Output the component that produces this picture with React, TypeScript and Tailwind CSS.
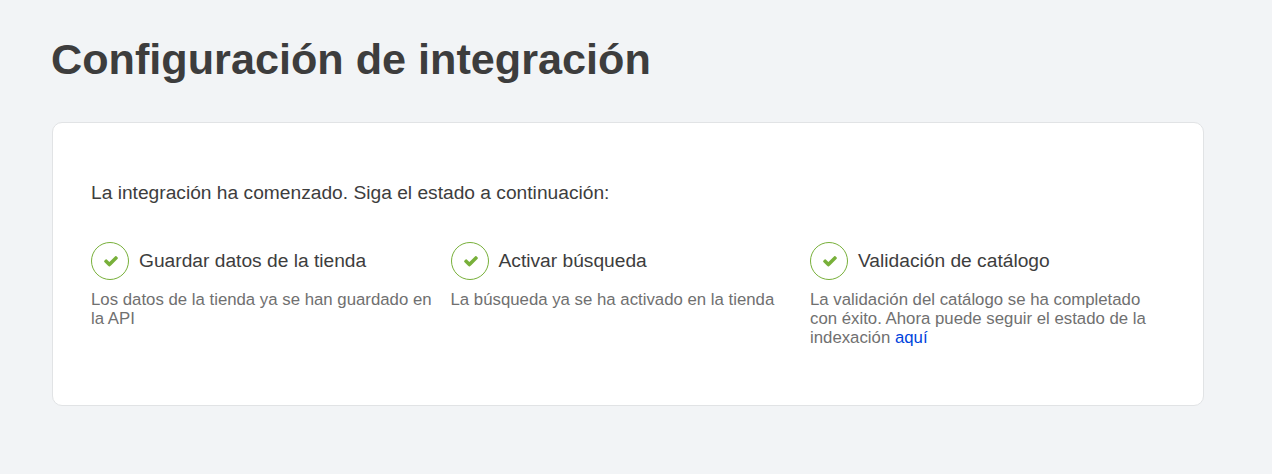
import React from "react";

type Step = { title: string; body: React.ReactNode };

const steps: Step[] = [
  { title: "Guardar datos de la tienda", body: "Los datos de la tienda ya se han guardado en la API" },
  { title: "Activar búsqueda", body: "La búsqueda ya se ha activado en la tienda" },
  {
    title: "Validación de catálogo",
    body: (
      <>
        La validación del catálogo se ha completado con éxito. Ahora puede seguir el estado de la indexación{" "}
        <a href="#" className="text-[#0044dd]">aquí</a>
      </>
    ),
  },
];

function CheckIcon() {
  return (
    <svg viewBox="0 0 1792 1792" fill="currentColor" aria-hidden="true" className="size-4">
      <path d="M1671 566q0 40-28 68l-724 724-136 136q-28 28-68 28t-68-28l-136-136-362-362q-28-28-28-68t28-68l136-136q28-28 68-28t68 28l294 295 656-657q28-28 68-28t68 28l136 136q28 28 28 68z" />
    </svg>
  );
}

export default function App() {
  return (
    <main className="min-h-screen bg-[#f2f4f6] pt-8 pl-[52px] font-['Liberation_Sans',Arial,sans-serif] text-[#3d3d3d]">
      <h1 className="-ml-px text-[43.2px] leading-[54px] font-bold">Configuración de integración</h1>
      <section className="mt-9 h-[284px] w-[1152px] rounded-[10px] border border-[#e1e3e5] bg-white pt-[59px] pl-[38px]">
        <p className="text-[19.2px] leading-[22px]">La integración ha comenzado. Siga el estado a continuación:</p>
        <div className="mt-[38px] grid grid-cols-[repeat(3,359.5px)]">
          {steps.map((step) => (
            <div key={step.title}>
              <div className="flex items-center gap-[10px]">
                <span className="flex size-[38px] items-center justify-center rounded-full border border-[#78b03a] pl-0.5 text-[#78b03a]">
                  <CheckIcon />
                </span>
                <h2 className="text-[19.2px] leading-[22px]">{step.title}</h2>
              </div>
              <p className="mt-[10px] w-[345px] text-[16.8px] leading-[19px] text-[#707070]">{step.body}</p>
            </div>
          ))}
        </div>
      </section>
    </main>
  );
}
